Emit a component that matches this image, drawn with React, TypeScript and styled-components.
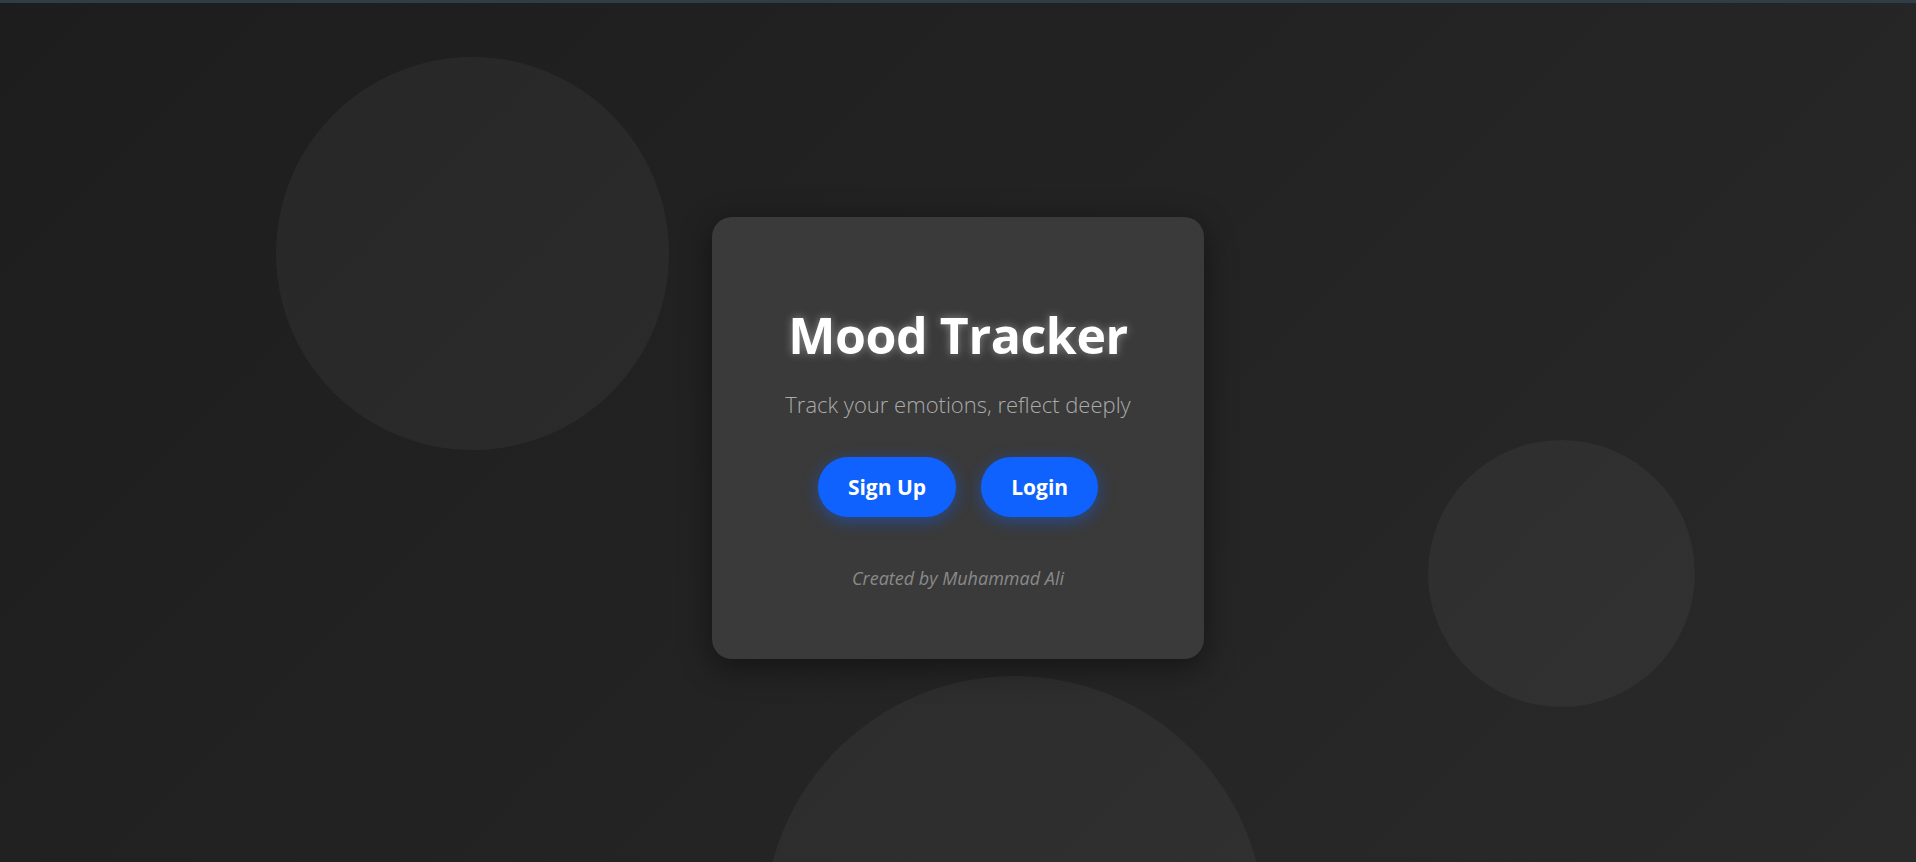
import React from 'react';
import styled, {createGlobalStyle} from 'styled-components';

// page reset + background
const GlobalStyle = createGlobalStyle`
  html, body {
    margin: 0;
    padding: 0;
    height: 100%;
  }

  body {
    font-family: "Open Sans", "Noto Sans", sans-serif;
    background: linear-gradient(135deg, #1d1d1d 0%, #232323 50%, #2a2a2a 100%);
    overflow: hidden;
  }
`;

const TopBar = styled.div`
  height: 3px;
  background: #2f3d46;
`;

const Page = styled.main`
  position: relative;
  min-height: calc(100vh - 3px);
  box-sizing: border-box;
  padding-top: 11px;
  display: flex;
  align-items: center;
  justify-content: center;
  overflow: hidden;
`;

// decorative blobs floating behind the card
const Bubble = styled.div<{ $size: number; $left: number; $top: number }>`
  position: absolute;
  left: ${props => props.$left}px;
  top: ${props => props.$top}px;
  width: ${props => props.$size}px;
  height: ${props => props.$size}px;
  border-radius: 50%;
  background: rgba(255, 255, 255, 0.045);
`;

const Card = styled.section`
  position: relative;
  z-index: 1;
  width: 492px;
  height: 442px;
  box-sizing: border-box;
  padding: 88px 40px 0;
  border-radius: 20px;
  background: #3a3a3a;
  box-shadow: 0 8px 32px rgba(0, 0, 0, 0.45);
  display: flex;
  flex-direction: column;
  align-items: center;
  text-align: center;
`;

const Title = styled.h1`
  margin: 0;
  font-size: 50px;
  line-height: 60px;
  font-weight: 700;
  color: #fff;
  letter-spacing: -0.4px;
  text-shadow: 0 0 10px rgba(255, 255, 255, 0.4);
`;

const Subtitle = styled.p`
  margin: 24px 0 0;
  font-size: 22px;
  line-height: 30px;
  font-weight: 300;
  color: #ababab;
`;

const ButtonRow = styled.div`
  margin-top: 38px;
  display: flex;
  gap: 25px;
`;

const Button = styled.button`
  height: 60px;
  padding: 0 30px;
  border: none;
  border-radius: 30px;
  background: #0f62fe;
  color: #fff;
  font-family: inherit;
  font-size: 21px;
  font-weight: 700;
  cursor: pointer;
  box-shadow: 0 4px 16px rgba(15, 98, 254, 0.45);

  &:hover {
    background: #0a52d9;
  }
`;

const Footer = styled.p`
  margin: 49px 0 0;
  font-size: 18px;
  line-height: 24px;
  font-style: italic;
  color: #8a8a8a;
`;

const App: React.FC = () => {
    return (
        <>
            <GlobalStyle/>
            <TopBar/>
            <Page>
                <Bubble $size={393} $left={276} $top={54}/>
                <Bubble $size={267} $left={1428} $top={437}/>
                <Bubble $size={501} $left={764} $top={673}/>
                <Card>
                    <Title>Mood Tracker</Title>
                    <Subtitle>Track your emotions, reflect deeply</Subtitle>
                    <ButtonRow>
                        <Button>Sign Up</Button>
                        <Button>Login</Button>
                    </ButtonRow>
                    <Footer>Created by Muhammad Ali</Footer>
                </Card>
            </Page>
        </>
    );
};

export default App;
